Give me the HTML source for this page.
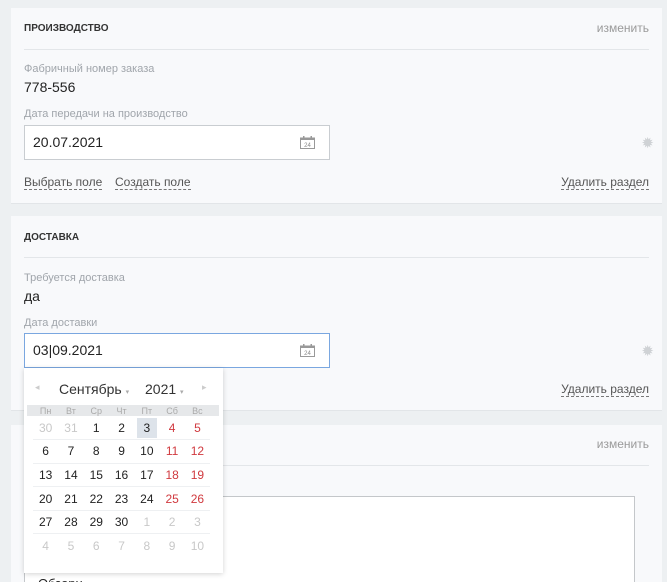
<!DOCTYPE html>
<html><head><meta charset="utf-8"><style>
*{box-sizing:border-box;margin:0;padding:0}
html,body{width:667px;height:582px;overflow:hidden}
body{background:#edf0f2;font-family:"Liberation Sans",Arial,sans-serif;position:relative;color:#222}
.p{position:absolute;left:11px;width:651px;background:#f8f9fb;border-bottom:1px solid #e2e5e8;overflow:hidden}
.abs{position:absolute}
.h{font-size:10px;font-weight:bold;color:#333;left:13px}
.ch{font-size:12px;color:#9a9a9a;right:13px}
.hr{left:13px;right:13px;height:1px;background:#e3e6e9}
.lab{font-size:11px;color:#a0a5ab;left:13px}
.val{font-size:14px;color:#222;left:13px}
.inp{left:13px;width:306px;height:35px;background:#fff;border:1px solid #c9cdd1}
.inp span{position:absolute;left:8px;top:8px;font-size:14px;color:#222}
.cal{position:absolute;right:14px;top:10px;width:15px;height:13px}
.lnk{font-size:12px;color:#555;border-bottom:1px dashed #777;line-height:13px}
.gear{right:8px;font-size:15px;color:#cfd2d5;line-height:15px}
.dp{position:absolute;left:24px;top:368px;width:199px;height:205px;background:#fff;box-shadow:0 1px 5px rgba(0,0,0,.18)}
.dp table{position:absolute;left:9px;top:37px;border-collapse:collapse;font-size:12px}
.dp td{width:25.3px;min-width:25.3px;text-align:center;height:23.6px;border-bottom:1px solid #eef0f2;color:#222;padding:0}
.dp tr.wd td{height:11px;color:#aaa;font-size:9px;border:0}
.g{color:#c8c8c8!important}.r{color:#d0393e!important}
</style></head><body>
<div class="p" style="top:8px;height:196px">
 <div class="abs h" style="top:15px">ПРОИЗВОДСТВО</div>
 <div class="abs ch" style="top:13px">изменить</div>
 <div class="abs hr" style="top:41px"></div>
 <div class="abs lab" style="top:55px">Фабричный номер заказа</div>
 <div class="abs val" style="top:71px">778-556</div>
 <div class="abs lab" style="top:100px">Дата передачи на производство</div>
 <div class="abs inp" style="top:117px"><span>20.07.2021</span><svg class="cal" viewBox="0 0 15 13"><rect x="0.5" y="2" width="14" height="10.5" fill="#fff" stroke="#999"/><rect x="0.5" y="2" width="14" height="2" fill="#999"/><rect x="3" y="0" width="1.5" height="3" fill="#999"/><rect x="10.5" y="0" width="1.5" height="3" fill="#999"/><text x="7.5" y="11" font-size="6" text-anchor="middle" fill="#888" font-family="Liberation Sans">24</text></svg></div>
 <div class="abs gear" style="top:128px">✹</div>
 <div class="abs lnk" style="left:13px;top:168px">Выбрать поле</div>
 <div class="abs lnk" style="left:104px;top:168px">Создать поле</div>
 <div class="abs lnk" style="right:13px;top:168px">Удалить раздел</div>
</div>
<div class="p" style="top:216px;height:195px">
 <div class="abs h" style="top:16px">ДОСТАВКА</div>
 <div class="abs hr" style="top:41px"></div>
 <div class="abs lab" style="top:56px">Требуется доставка</div>
 <div class="abs val" style="top:72px">да</div>
 <div class="abs lab" style="top:101px">Дата доставки</div>
 <div class="abs inp" style="top:117px;border-color:#7aa7e0"><span>03|09.2021</span><svg class="cal" viewBox="0 0 15 13"><rect x="0.5" y="2" width="14" height="10.5" fill="#fff" stroke="#999"/><rect x="0.5" y="2" width="14" height="2" fill="#999"/><rect x="3" y="0" width="1.5" height="3" fill="#999"/><rect x="10.5" y="0" width="1.5" height="3" fill="#999"/><text x="7.5" y="11" font-size="6" text-anchor="middle" fill="#888" font-family="Liberation Sans">24</text></svg></div>
 <div class="abs gear" style="top:128px">✹</div>
 <div class="abs lnk" style="right:13px;top:167px">Удалить раздел</div>
</div>
<div class="p" style="top:425px;height:157px;border-bottom:0">
 <div class="abs ch" style="top:12px">изменить</div>
 <div class="abs hr" style="top:40px"></div>
 <div class="abs" style="left:13px;top:71px;width:611px;height:100px;background:#fff;border:1px solid #c4c7ca"></div>
 <div class="abs" style="left:27px;top:151px;font-size:13px">Обзорн</div>
</div>
<div class="dp">
 <div class="abs" style="left:3px;top:37px;width:192px;height:11px;background:#e6e8ea"></div>
 <div class="abs" style="left:11px;top:14px;font-size:9px;color:#ccc">◂</div>
 <div class="abs" style="left:35px;top:13px;font-size:14px;color:#333">Сентябрь <span style="font-size:7px;color:#aaa">▾</span></div>
 <div class="abs" style="left:121px;top:13px;font-size:14px;color:#333">2021 <span style="font-size:7px;color:#aaa">▾</span></div>
 <div class="abs" style="left:178px;top:14px;font-size:9px;color:#ccc">▸</div>
 <table>
 <tr class="wd"><td>Пн</td><td>Вт</td><td>Ср</td><td>Чт</td><td>Пт</td><td>Сб</td><td>Вс</td></tr>
 <tr><td class="g">30</td><td class="g">31</td><td>1</td><td>2</td><td><span style="display:inline-block;width:20px;height:20px;line-height:20px;background:#dde3ea">3</span></td><td class="r">4</td><td class="r">5</td></tr>
 <tr><td>6</td><td>7</td><td>8</td><td>9</td><td>10</td><td class="r">11</td><td class="r">12</td></tr>
 <tr><td>13</td><td>14</td><td>15</td><td>16</td><td>17</td><td class="r">18</td><td class="r">19</td></tr>
 <tr><td>20</td><td>21</td><td>22</td><td>23</td><td>24</td><td class="r">25</td><td class="r">26</td></tr>
 <tr><td>27</td><td>28</td><td>29</td><td>30</td><td class="g">1</td><td class="g">2</td><td class="g">3</td></tr>
 <tr><td class="g" style="border:0">4</td><td class="g" style="border:0">5</td><td class="g" style="border:0">6</td><td class="g" style="border:0">7</td><td class="g" style="border:0">8</td><td class="g" style="border:0">9</td><td class="g" style="border:0">10</td></tr>
 </table>
</div>
</body></html>
